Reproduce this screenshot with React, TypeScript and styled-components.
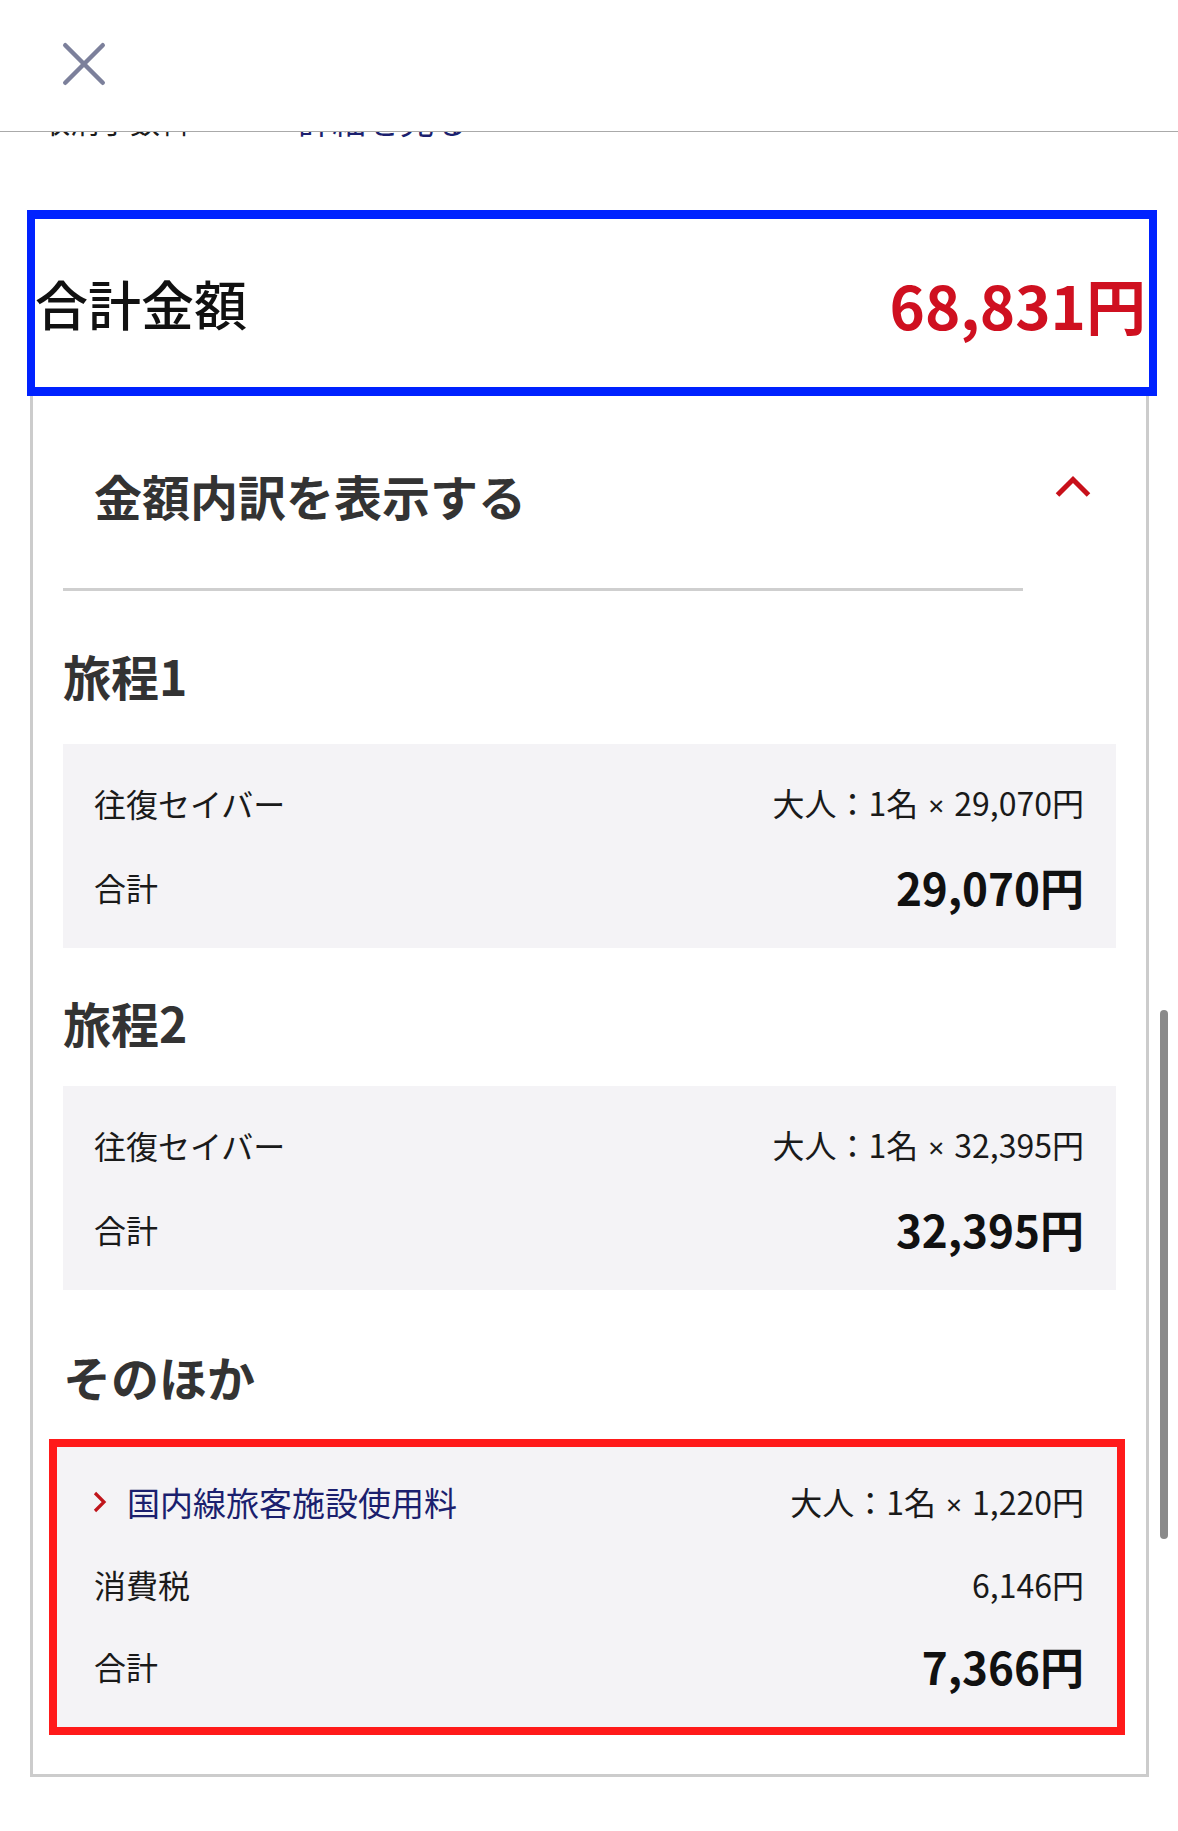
import React from "react";
import styled, { createGlobalStyle } from "styled-components";

const Global = createGlobalStyle`
  html, body { margin: 0; padding: 0; background: #fff; }
  body {
    font-family: "Noto Sans CJK JP", "Noto Sans", sans-serif;
    color: #1a1a1a;
  }
  * { box-sizing: border-box; }
`;

const Header = styled.header`
  position: fixed;
  top: 0;
  left: 0;
  right: 0;
  height: 132px;
  background: #fff;
  border-bottom: 1px solid #aaaaaa;
  z-index: 10;
  padding: 41px 0 0 61px;
`;

const CloseButton = styled.button`
  display: block;
  width: 46px;
  height: 46px;
  padding: 0;
  border: 0;
  background: transparent;
  cursor: pointer;
`;

const Main = styled.main`
  padding-top: 99px;
`;

const PeekRow = styled.div`
  display: flex;
  align-items: center;
  height: 42px;
  padding-left: 40px;
  font-size: 30px;
  line-height: 42px;
`;

const PeekLabel = styled.span`
  color: #1a1a1a;
`;

const PeekLink = styled.span`
  display: flex;
  align-items: center;
  margin-left: 56px;
  color: #1b1f6e;
  font-size: 34px;
  gap: 36px;
`;

const Card = styled.section`
  margin: 69px 0 0 30px;
  width: 1119px;
  border: 3px solid #cccccc;
  border-top: 0;
`;

const TotalRow = styled.div`
  display: flex;
  align-items: center;
  justify-content: space-between;
  height: 186px;
  margin: 0 -11px 0 -6px;
  border-style: solid;
  border-color: #0022ff;
  border-width: 9px 8px;
  padding: 0 3px 0 0;
  background: #fff;
`;

const TotalLabel = styled.span`
  font-size: 53px;
  font-weight: 500;
  color: #111;
`;

const TotalValue = styled.span`
  font-size: 60px;
  font-weight: 700;
  color: #cf1020;
`;

const Body = styled.div`
  padding: 0 30px 39px 30px;
`;

const AccordionHeader = styled.div`
  display: flex;
  justify-content: space-between;
  align-items: flex-start;
  padding: 66px 25px 0 31px;
`;

const AccordionTitle = styled.h2`
  margin: 0;
  font-size: 48px;
  line-height: 66px;
  font-weight: 700;
  color: #333;
`;

const ChevronUp = styled.svg`
  margin-top: 13px;
  flex: none;
`;

const Divider = styled.hr`
  margin: 60px 93px 0 0;
  height: 3px;
  border: 0;
  background: #cfcfcf;
`;

const SectionTitle = styled.h3<{ $mt: number }>`
  margin: ${(p) => p.$mt}px 0 0;
  font-size: 48px;
  line-height: 66px;
  font-weight: 700;
  color: #333;
`;

const PriceBox = styled.div<{ $mt: number }>`
  margin-top: ${(p) => p.$mt}px;
  background: #f4f3f6;
  padding: 31px 32px 33px 31px;
  display: flex;
  flex-direction: column;
  gap: 28px;
`;

const HighlightBox = styled.div<{ $mt: number }>`
  margin: ${(p) => p.$mt}px -9px 0 -14px;
  background: #f4f3f6;
  border: 8px solid #ff1a1a;
  padding: 27px 33px 33px 37px;
  display: flex;
  flex-direction: column;
  gap: 26px;
`;

const Line = styled.div`
  display: flex;
  align-items: center;
  justify-content: space-between;
  height: 56px;
  line-height: 56px;
`;

const Label = styled.span`
  font-size: 32px;
  color: #1a1a1a;
`;

const LinkLabel = styled.span`
  display: flex;
  align-items: center;
  gap: 19px;
  font-size: 33px;
  color: #1b1f6e;
  margin-left: -2px;
`;

const Detail = styled.span`
  font-size: 32px;
  color: #1a1a1a;
`;

const Times = styled.span`
  font-family: "Noto Sans", sans-serif;
  font-size: 28px;
  margin: 0 10px;
`;

const Amount = styled.span`
  font-size: 44px;
  font-weight: 700;
  color: #111;
`;

const Scrollbar = styled.div`
  position: fixed;
  top: 1010px;
  right: 10px;
  width: 8px;
  height: 529px;
  border-radius: 4px;
  background: #8a8a8a;
`;

const PerPerson = ({ price }: { price: string }) => (
  <Detail>
    大人：1名<Times>×</Times>
    {price}
  </Detail>
);

const Leg = ({ title, titleMt, boxMt, price }: { title: string; titleMt: number; boxMt: number; price: string }) => (
  <>
    <SectionTitle $mt={titleMt}>{title}</SectionTitle>
    <PriceBox $mt={boxMt}>
      <Line>
        <Label>往復セイバー</Label>
        <PerPerson price={price} />
      </Line>
      <Line>
        <Label>合計</Label>
        <Amount>{price}</Amount>
      </Line>
    </PriceBox>
  </>
);

export default function App() {
  return (
    <>
      <Global />
      <Header>
        <CloseButton aria-label="閉じる">
          <svg width="46" height="46" viewBox="0 0 46 46">
            <g stroke="#7c809b" strokeWidth="4.5" strokeLinecap="round">
              <line x1="4.25" y1="4.25" x2="41.75" y2="41.75" />
              <line x1="41.75" y1="4.25" x2="4.25" y2="41.75" />
            </g>
          </svg>
        </CloseButton>
      </Header>
      <Main>
        <PeekRow>
          <PeekLabel>取消手数料</PeekLabel>
          <PeekLink>
            <svg width="16" height="12" viewBox="0 0 16 12">
              <polyline points="2,2 8,9 14,2" fill="none" stroke="#c8101a" strokeWidth="3" />
            </svg>
            詳細を見る
          </PeekLink>
        </PeekRow>
        <Card>
          <TotalRow>
            <TotalLabel>合計金額</TotalLabel>
            <TotalValue>68,831円</TotalValue>
          </TotalRow>
          <Body>
            <AccordionHeader>
              <AccordionTitle>金額内訳を表示する</AccordionTitle>
              <ChevronUp width="36" height="24" viewBox="0 0 36 24">
                <polyline points="2.5,20 18,4.5 33.5,20" fill="none" stroke="#c8101a" strokeWidth="5" />
              </ChevronUp>
            </AccordionHeader>
            <Divider />
            <Leg title="旅程1" titleMt={51} boxMt={36} price="29,070円" />
            <Leg title="旅程2" titleMt={41} boxMt={31} price="32,395円" />
            <SectionTitle $mt={53}>そのほか</SectionTitle>
            <HighlightBox $mt={30}>
              <Line>
                <LinkLabel>
                  <svg width="16" height="22" viewBox="0 0 16 22">
                    <polyline points="3,2 12,11 3,20" fill="none" stroke="#c0151b" strokeWidth="3.2" />
                  </svg>
                  国内線旅客施設使用料
                </LinkLabel>
                <PerPerson price="1,220円" />
              </Line>
              <Line>
                <Label>消費税</Label>
                <Detail>6,146円</Detail>
              </Line>
              <Line>
                <Label>合計</Label>
                <Amount>7,366円</Amount>
              </Line>
            </HighlightBox>
          </Body>
        </Card>
      </Main>
      <Scrollbar />
    </>
  );
}
